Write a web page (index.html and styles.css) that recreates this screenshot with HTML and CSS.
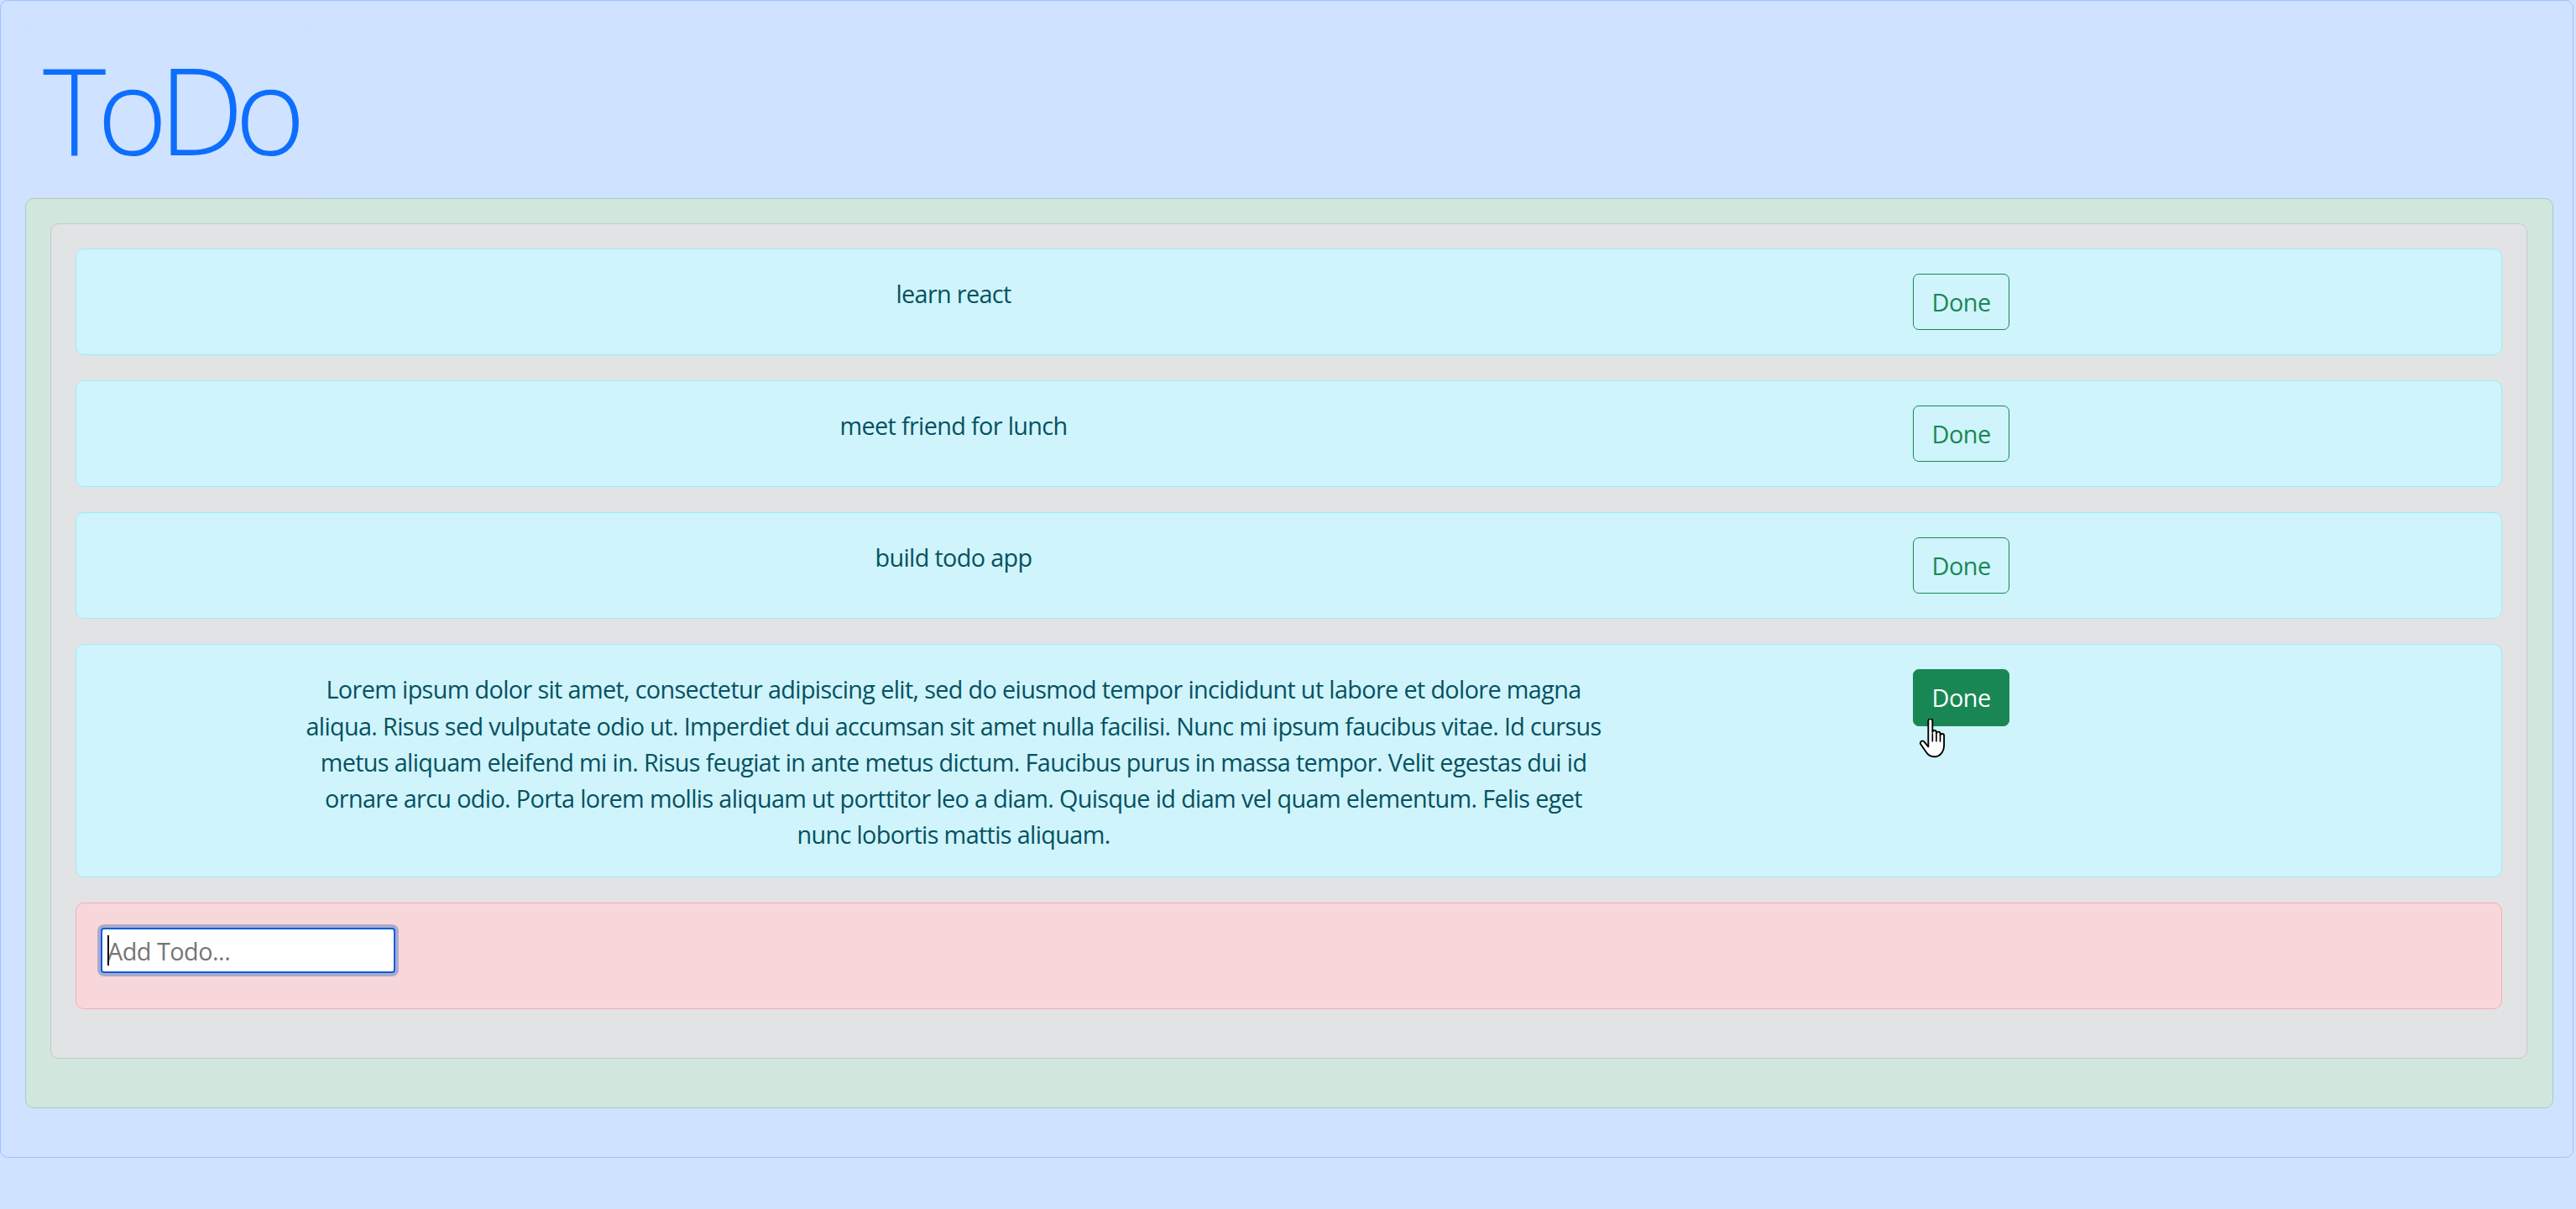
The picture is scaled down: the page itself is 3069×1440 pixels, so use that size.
FILE: index.html
```html
<!DOCTYPE html>
<html lang="en">
<head>
<meta charset="utf-8">
<title>ToDo</title>
<link rel="stylesheet" href="styles.css">
</head>
<body>
<div class="app">
  <div class="title-box"><h1 class="title">ToDo</h1></div>
  <div class="panel">
    <div class="list">
      <div class="todo">
        <div class="todo-text">learn react</div>
        <div class="todo-action"><button class="btn-done" type="button">Done</button></div>
      </div>
      <div class="todo">
        <div class="todo-text">meet friend for lunch</div>
        <div class="todo-action"><button class="btn-done" type="button">Done</button></div>
      </div>
      <div class="todo">
        <div class="todo-text">build todo app</div>
        <div class="todo-action"><button class="btn-done" type="button">Done</button></div>
      </div>
      <div class="todo">
        <div class="todo-text">Lorem ipsum dolor sit amet, consectetur adipiscing elit, sed do eiusmod tempor incididunt ut labore et dolore magna<br>aliqua. Risus sed vulputate odio ut. Imperdiet dui accumsan sit amet nulla facilisi. Nunc mi ipsum faucibus vitae. Id cursus<br>metus aliquam eleifend mi in. Risus feugiat in ante metus dictum. Faucibus purus in massa tempor. Velit egestas dui id<br>ornare arcu odio. Porta lorem mollis aliquam ut porttitor leo a diam. Quisque id diam vel quam elementum. Felis eget<br>nunc lobortis mattis aliquam.</div>
        <div class="todo-action">
          <button class="btn-done is-hover" type="button">Done</button>
          <svg class="cursor" viewBox="0 0 17 23" width="36" height="48" aria-hidden="true">
            <path d="M5.3 1.3c0-.7.5-1.3 1.2-1.3s1.2.6 1.2 1.3v6.4c.1-.6.6-1 1.1-1 .6 0 1.1.5 1.1 1.1v.6c.1-.5.6-.9 1.1-.9.6 0 1.1.5 1.1 1.1v.8c.1-.5.6-.8 1.1-.8.6 0 1.1.5 1.1 1.1v5.4c0 3.7-2.300 6.6-5.6 6.6-2.3 0-3.6-1-4.8-2.9L1 14.6c-.4-.6-.2-1.3.3-1.7.6-.4 1.3-.2 1.7.3l2.3 2.8V1.3z" fill="#fff" stroke="#000" stroke-width="0.9" stroke-linejoin="round"/>
            <path d="M7.7 8.6v4.2M9.9 8.8v4M12.1 9.6v3.3" fill="none" stroke="#000" stroke-width="0.8" stroke-linecap="round"/>
          </svg>
        </div>
      </div>
      <div class="add-todo">
        <span class="input-wrap"><input class="add-input" type="text" placeholder="Add Todo..."></span>
      </div>
    </div>
  </div>
</div>
</body>
</html>
```
FILE: styles.css
```css
* {
  box-sizing: border-box;
}

html,
body {
  margin: 0;
}

body {
  background: #cfe2ff;
  font-family: "Open Sans", "Noto Sans", sans-serif;
  font-size: 28.8px;
  line-height: 43.2px;
  color: #212529;
}

.app {
  width: 3066px;
  display: flex;
  flex-direction: column;
  align-items: flex-start;
  border: 1px solid #9ec5fe;
  border-radius: 9px;
  padding: 29px 23px 58px 29px;
}

.title-box {
  border: 1px solid #d5dfef;
  border-radius: 10px;
  padding: 12px 18px 19px 20px;
}

.title {
  margin: 0;
  font-size: 144px;
  line-height: 172.8px;
  font-weight: 300;
  color: #0d6efd;
  letter-spacing: -11px;
}

.panel {
  align-self: stretch;
  background: #d1e7dd;
  border: 1px solid #a3cfbb;
  border-radius: 10px;
  padding: 29px 30px 58px 29px;
}

.list {
  display: flex;
  flex-direction: column;
  gap: 30px;
  background: #e2e3e5;
  border: 1px solid #c4c8cb;
  border-radius: 10px;
  padding: 29px 29px 58px 29px;
}

.todo {
  display: grid;
  grid-template-columns: 2032px 1fr;
  align-items: start;
  background: #cff4fc;
  border: 1px solid #9eeaf9;
  border-radius: 10px;
  padding: 29px;
  color: #055160;
}

.todo-text {
  padding-top: 2px;
  text-align: center;
  letter-spacing: -0.65px;
}

.todo-action {
  position: relative;
  padding-left: 127px;
}

.btn-done {
  display: block;
  font-family: inherit;
  font-size: 28.8px;
  line-height: 43.2px;
  letter-spacing: -0.5px;
  padding: 11px 21.6px;
  border: 1px solid #198754;
  border-radius: 7px;
  background: transparent;
  color: #198754;
  cursor: pointer;
}

.btn-done.is-hover {
  background: #198754;
  color: #ffffff;
}

.cursor {
  position: absolute;
  left: 134px;
  top: 59px;
}

.add-todo {
  display: flex;
  align-items: flex-start;
  min-height: 127px;
  background: #f8d7da;
  border: 1px solid #f1aeb5;
  border-radius: 10px;
  padding: 29px;
}

.input-wrap {
  position: relative;
  display: block;
}

.input-wrap::after {
  content: "";
  position: absolute;
  left: 8px;
  top: 9px;
  width: 2px;
  height: 36px;
  background: #000;
}

.add-input {
  display: block;
  width: 351px;
  height: 54px;
  padding: 0 6px;
  border: 2px solid #0b5ed7;
  border-radius: 4px;
  box-shadow: 0 0 0 4px #aaaacf;
  outline: none;
  background: #fff;
  font-family: inherit;
  font-size: 28.8px;
  letter-spacing: -0.5px;
  color: #212529;
}

.add-input::placeholder {
  color: #757575;
}
```
